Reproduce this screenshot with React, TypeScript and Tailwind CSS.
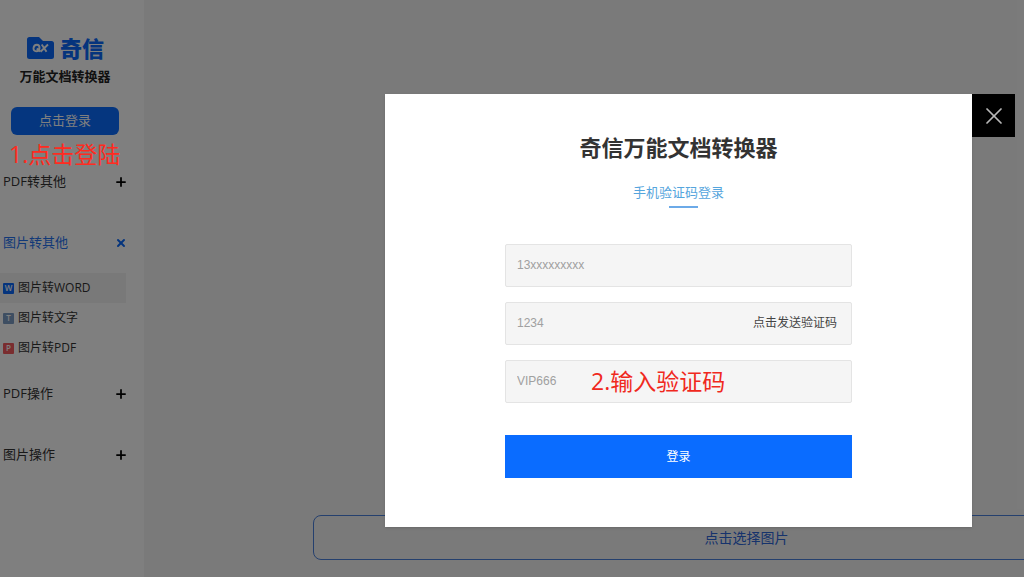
import React from 'react';
import { X, Plus } from 'lucide-react';

interface SubItem {
  id: string;
  label: string;
  letter: string;
  color: string;
  active?: boolean;
}

interface MenuGroup {
  id: string;
  label: string;
  open?: boolean;
  items?: SubItem[];
}

const groups: MenuGroup[] = [
  { id: 'pdf-convert', label: 'PDF转其他' },
  {
    id: 'img-convert',
    label: '图片转其他',
    open: true,
    items: [
      { id: 'word', label: '图片转WORD', letter: 'W', color: 'bg-[#0a69fb]', active: true },
      { id: 'text', label: '图片转文字', letter: 'T', color: 'bg-[#7d9dc4]' },
      { id: 'pdf', label: '图片转PDF', letter: 'P', color: 'bg-[#f45a5f]' },
    ],
  },
  { id: 'pdf-edit', label: 'PDF操作' },
  { id: 'img-edit', label: '图片操作' },
];

const fields = [
  { id: 'phone', label: '手机号', placeholder: '13xxxxxxxxx' },
  { id: 'code', label: '验证码', placeholder: '1234', send: true },
  { id: 'invite', label: '邀请码', placeholder: 'VIP666', note: '2.输入验证码' },
];

function Logo() {
  return (
    <div className="flex items-center gap-1.5">
      <svg viewBox="0 0 28 22" className="h-[22px] w-7" aria-hidden="true">
        <path d="M3.500 0H13l4 4h8.500A2.500 2.500 0 0 1 28 6.500v13a2.500 2.500 0 0 1-2.500 2.500h-22A2.500 2.500 0 0 1 1 19.500v-17A2.500 2.500 0 0 1 3.500 0z" fill="#0a69fb" />
        <path
          d="M13.500 11c0 1.900-1.500 3.200-3.300 3.200S7.300 13 7.500 11.200s1.600-3.400 3.400-3.400 2.600 1.400 2.600 3.200zM10.800 11.500l3.200 3.200M15.700 7.500l4.800 7.200M22 7.500l-7.500 7.200"
          fill="none"
          stroke="#fff"
          strokeWidth="1.900"
        />
      </svg>
      <span className="text-[22px] leading-6 font-black text-[#0a69fb]">奇信</span>
    </div>
  );
}

function MenuSection({ group }: { group: MenuGroup }) {
  return (
    <li>
      <button
        className={`flex h-[61px] w-full items-center justify-between text-[13px] ${
          group.open ? 'text-[#2573f0]' : 'text-[#333]'
        }`}
      >
        <span>{group.label}</span>
        <span className="flex size-3.5 items-center justify-center">
          {group.open ? (
            <X className="size-3 text-[#0a69fb]" strokeWidth={4} />
          ) : (
            <Plus className="size-3.5 text-black" strokeWidth={3} />
          )}
        </span>
      </button>
      {group.items && (
        <ul className="mr-0.5 -ml-[3px]">
          {group.items.map((item) => (
            <li key={item.id}>
              <a
                href={`#${item.id}`}
                className={`flex h-[30px] items-center gap-1 pl-[3px] text-[12px] text-[#333] ${
                  item.active ? 'bg-[#f2f2f2]' : ''
                }`}
              >
                <span className={`flex size-[11px] items-center justify-center rounded-[1px] text-[8px] leading-none font-semibold text-white ${item.color}`}>
                  {item.letter}
                </span>
                {item.label}
              </a>
            </li>
          ))}
        </ul>
      )}
    </li>
  );
}

function LoginDialog() {
  return (
    <div
      role="dialog"
      aria-modal="true"
      aria-labelledby="login-title"
      className="relative w-[587px] bg-white px-[120px] pt-[39px] pb-[49px] shadow-sm"
    >
      <h1 id="login-title" className="text-center text-[22px] leading-7 font-bold text-[#333]">
        奇信万能文档转换器
      </h1>
      <div className="mt-[21px] flex flex-col items-center">
        <button className="text-[13px] leading-5 text-[#55a5dd]">手机验证码登录</button>
        <span className="mt-1 ml-2.5 h-0.5 w-[29px] bg-[#6caae8]" />
      </div>

      <form className="mt-9" onSubmit={(e) => e.preventDefault()}>
        <div className="flex flex-col gap-[15px]">
          {fields.map((field) => (
            <div
              key={field.id}
              className="relative flex h-[43px] items-center rounded-xs border border-[#e4e4e4] bg-[#f5f5f5] pr-3.5 pb-0.5 pl-[11px]"
            >
              <input
                id={field.id}
                aria-label={field.label}
                placeholder={field.placeholder}
                className="w-full min-w-0 flex-1 bg-transparent font-['Liberation_Sans','Noto_Sans_CJK_SC',sans-serif] text-[12px] outline-none placeholder:text-[#a0a0a0]"
              />
              {field.send && (
                <button type="button" className="shrink-0 text-[12px] text-[#444]">
                  点击发送验证码
                </button>
              )}
              {field.note && (
                <span className="pointer-events-none absolute left-[85px] text-[23px] leading-8 text-[#f0291d]">{field.note}</span>
              )}
            </div>
          ))}
        </div>
        <button type="submit" className="mt-8 h-[43px] w-full bg-[#0a6cff] text-[12px] text-white">
          登录
        </button>
      </form>

      <button aria-label="关闭" className="absolute top-0 left-full flex size-[43px] items-center justify-center bg-black text-[#b8b8b8]">
        <X className="size-7" strokeWidth={1.5} />
      </button>
    </div>
  );
}

export default function App() {
  return (
    <div className="relative flex min-h-screen overflow-hidden bg-[#f5f5f5] font-['Open_Sans','Noto_Sans_CJK_SC',sans-serif]">
      {/* Sidebar */}
      <aside className="w-36 shrink-0 bg-white pt-9">
        <div className="flex w-[130px] flex-col items-center">
          <Logo />
          <p className="mt-1.5 text-[13px] leading-5 font-bold text-[#222]">万能文档转换器</p>
          <button className="mt-[21px] h-7 w-[108px] rounded-md bg-[#0a6cff] text-[13px] text-white">点击登录</button>
        </div>
        <nav className="mt-4 mr-4 ml-[3px]">
          <ul>
            {groups.map((group) => (
              <MenuSection key={group.id} group={group} />
            ))}
          </ul>
        </nav>
      </aside>

      {/* Upload area, wider than the visible page */}
      <main className="flex min-w-0 flex-1 flex-col justify-end pb-[17px] pl-[169px]">
        <button className="h-[45px] w-[867px] rounded-lg border border-[#4a80dc] text-[14px] text-[#2c66d8]">
          点击选择图片
        </button>
      </main>

      {/* Overlay */}
      <div className="absolute inset-0 flex items-center justify-end bg-black/50 pt-11 pr-[52px]">
        <LoginDialog />
      </div>
      <p className="absolute top-[138px] left-[9px] text-[23px] leading-8 text-[#ff2b20]">1.点击登陆</p>
    </div>
  );
}
